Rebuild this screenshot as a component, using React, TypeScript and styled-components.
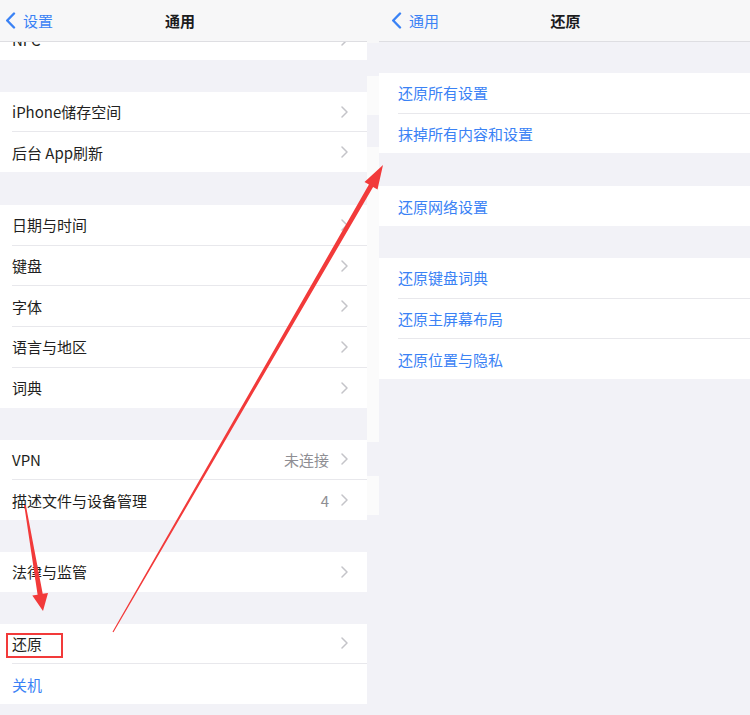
import React from "react";
import styled, { createGlobalStyle } from "styled-components";

const GlobalStyle = createGlobalStyle`
  html, body { margin: 0; padding: 0; background: #f2f2f7; }
  body { font-family: "Noto Sans CJK SC", "Noto Sans", sans-serif; -webkit-font-smoothing: antialiased; }
  * { box-sizing: border-box; }
`;

const BLUE = "#3a82f5";
const GREY_BG = "#f2f2f7";

const Page = styled.div`
  position: relative;
  width: 750px;
  height: 715px;
  display: flex;
  overflow: hidden;
  background: ${GREY_BG};
`;

const Viewport = styled.div<{ $width: number }>`
  width: ${(p) => p.$width}px;
  flex: 0 0 ${(p) => p.$width}px;
  height: 100%;
  overflow: hidden;
`;

const Screen = styled.div<{ $width: number; $shift: number }>`
  width: ${(p) => p.$width}px;
  margin-left: ${(p) => p.$shift}px;
  height: 100%;
  display: flex;
  flex-direction: column;
  background: ${GREY_BG};
`;

const NavBar = styled.div`
  height: 42px;
  flex: 0 0 42px;
  display: grid;
  grid-template-columns: 1fr auto 1fr;
  align-items: center;
  background: #f7f7f8;
  border-bottom: 1px solid #dedee2;
  position: relative;
  z-index: 2;
`;

const BackButton = styled.div`
  display: flex;
  align-items: center;
  gap: 7px;
  padding-left: 12px;
  color: ${BLUE};
  font-size: 15px;
  line-height: 1;
`;

const NavTitle = styled.div`
  font-size: 15px;
  font-weight: 600;
  color: #1c1c1e;
  line-height: 1;
`;

const Content = styled.div`
  flex: 1;
  overflow: hidden;
  display: flex;
  flex-direction: column;
`;

const Group = styled.div<{ $top: number }>`
  margin-top: ${(p) => p.$top}px;
  background: #ffffff;
  display: flex;
  flex-direction: column;
  flex-shrink: 0;
`;

const Row = styled.div`
  height: 39.7px;
  flex-shrink: 0;
  display: flex;
  align-items: center;
  padding: 0 19px;
  gap: 12px;
`;

const Label = styled.span<{ $tone?: "blue" | "dark" }>`
  flex: 1;
  font-size: 15px;
  line-height: 1;
  color: ${(p) => (p.$tone === "blue" ? BLUE : "#1f1f21")};
  white-space: nowrap;
`;

const Detail = styled.span`
  font-size: 15px;
  line-height: 1;
  color: #8e8e93;
`;

const Separator = styled.div`
  height: 1px;
  flex-shrink: 0;
  margin-left: 19px;
  background: #e8e8ec;
`;

const Strip = styled.div`
  width: 12px;
  flex: 0 0 12px;
  display: flex;
  flex-direction: column;
`;

const StripBlock = styled.div<{ $h: number; $tone: "nav" | "white" | "grey" }>`
  height: ${(p) => p.$h}px;
  flex: 0 0 ${(p) => p.$h}px;
  background: ${(p) =>
    p.$tone === "nav" ? "#f7f7f8" : p.$tone === "white" ? "#fbfbfb" : GREY_BG};
`;

const StripFill = styled.div`
  flex: 1;
  background: ${GREY_BG};
`;

const Overlay = styled.svg`
  position: absolute;
  left: 0;
  top: 0;
  width: 750px;
  height: 715px;
  pointer-events: none;
  z-index: 5;
`;

const BackChevron = () => (
  <svg width="11" height="17" viewBox="0 0 11 17">
    <path d="M9 1.5 L2.2 8.5 L9 15.5" fill="none" stroke={BLUE} strokeWidth="2.4" strokeLinecap="round" strokeLinejoin="round" />
  </svg>
);

const Chevron = () => (
  <svg width="7" height="12" viewBox="0 0 7 12">
    <path d="M1 1 L6 6 L1 11" fill="none" stroke="#c4c4c9" strokeWidth="1.5" strokeLinecap="round" strokeLinejoin="round" />
  </svg>
);

type Item = { label: string; detail?: string; tone?: "blue" | "dark"; chevron?: boolean };
type GroupData = { top: number; items: Item[] };

const leftGroups: GroupData[] = [
  { top: -22, items: [{ label: "NFC", chevron: true }] },
  { top: 32, items: [{ label: "iPhone储存空间", chevron: true }, { label: "后台 App刷新", chevron: true }] },
  {
    top: 33,
    items: [
      { label: "日期与时间", chevron: true },
      { label: "键盘", chevron: true },
      { label: "字体", chevron: true },
      { label: "语言与地区", chevron: true },
      { label: "词典", chevron: true },
    ],
  },
  {
    top: 32,
    items: [
      { label: "VPN", detail: "未连接", chevron: true },
      { label: "描述文件与设备管理", detail: "4", chevron: true },
    ],
  },
  { top: 32, items: [{ label: "法律与监管", chevron: true }] },
  { top: 32, items: [{ label: "还原", chevron: true }, { label: "关机", tone: "blue" }] },
];

const rightGroups: GroupData[] = [
  { top: 31, items: [{ label: "还原所有设置", tone: "blue" }, { label: "抹掉所有内容和设置", tone: "blue" }] },
  { top: 33, items: [{ label: "还原网络设置", tone: "blue" }] },
  {
    top: 32,
    items: [
      { label: "还原键盘词典", tone: "blue" },
      { label: "还原主屏幕布局", tone: "blue" },
      { label: "还原位置与隐私", tone: "blue" },
    ],
  },
];

const SettingsGroup = ({ data }: { data: GroupData }) => (
  <Group $top={data.top}>
    {data.items.map((it, i) => (
      <React.Fragment key={it.label}>
        {i > 0 && <Separator />}
        <Row>
          <Label $tone={it.tone}>{it.label}</Label>
          {it.detail && <Detail>{it.detail}</Detail>}
          {it.chevron && <Chevron />}
        </Row>
      </React.Fragment>
    ))}
  </Group>
);

const SettingsScreen = ({
  width,
  shift,
  screenWidth,
  back,
  title,
  groups,
}: {
  width: number;
  shift: number;
  screenWidth: number;
  back: string;
  title: string;
  groups: GroupData[];
}) => (
  <Viewport $width={width}>
    <Screen $width={screenWidth} $shift={shift}>
      <NavBar>
        <BackButton>
          <BackChevron />
          <span>{back}</span>
        </BackButton>
        <NavTitle>{title}</NavTitle>
        <div />
      </NavBar>
      <Content>
        {groups.map((g, i) => (
          <SettingsGroup key={i} data={g} />
        ))}
      </Content>
    </Screen>
  </Viewport>
);

// build tapered arrow polygon
function arrowPoints(
  tail: [number, number],
  tip: [number, number],
  headLen: number,
  headHalf: number,
  tailHalf: number,
  baseHalf: number
) {
  const dx = tip[0] - tail[0];
  const dy = tip[1] - tail[1];
  const len = Math.hypot(dx, dy);
  const ux = dx / len;
  const uy = dy / len;
  const nx = -uy;
  const ny = ux;
  const bx = tip[0] - ux * headLen;
  const by = tip[1] - uy * headLen;
  const pts: [number, number][] = [
    [tail[0] + nx * tailHalf, tail[1] + ny * tailHalf],
    [bx + nx * baseHalf, by + ny * baseHalf],
    [bx + nx * headHalf, by + ny * headHalf],
    [tip[0], tip[1]],
    [bx - nx * headHalf, by - ny * headHalf],
    [bx - nx * baseHalf, by - ny * baseHalf],
    [tail[0] - nx * tailHalf, tail[1] - ny * tailHalf],
  ];
  return pts.map((p) => `${p[0].toFixed(1)},${p[1].toFixed(1)}`).join(" ");
}

const RED = "#f23a3a";

export default function App() {
  return (
    <>
      <GlobalStyle />
      <Page>
        <SettingsScreen width={367} shift={-7} screenWidth={374} back="设置" title="通用" groups={leftGroups} />
        <Strip>
          <StripBlock $h={43} $tone="nav" />
          <StripBlock $h={33} $tone="grey" />
          <StripBlock $h={39} $tone="white" />
          <StripBlock $h={32} $tone="grey" />
          <StripBlock $h={295} $tone="white" />
          <StripBlock $h={34} $tone="grey" />
          <StripBlock $h={39} $tone="white" />
          <StripFill />
        </Strip>
        <SettingsScreen width={371} shift={0} screenWidth={373} back="通用" title="还原" groups={rightGroups} />
        <Overlay viewBox="0 0 750 715">
          <polygon points={arrowPoints([113, 632], [383, 165], 24, 7.5, 0.6, 2.4)} fill={RED} />
          <polygon points={arrowPoints([25, 505], [43, 611], 17, 8, 0.8, 2.6)} fill={RED} />
          <rect x="7" y="634" width="55" height="23" fill="none" stroke={RED} strokeWidth="2" />
        </Overlay>
      </Page>
    </>
  );
}
